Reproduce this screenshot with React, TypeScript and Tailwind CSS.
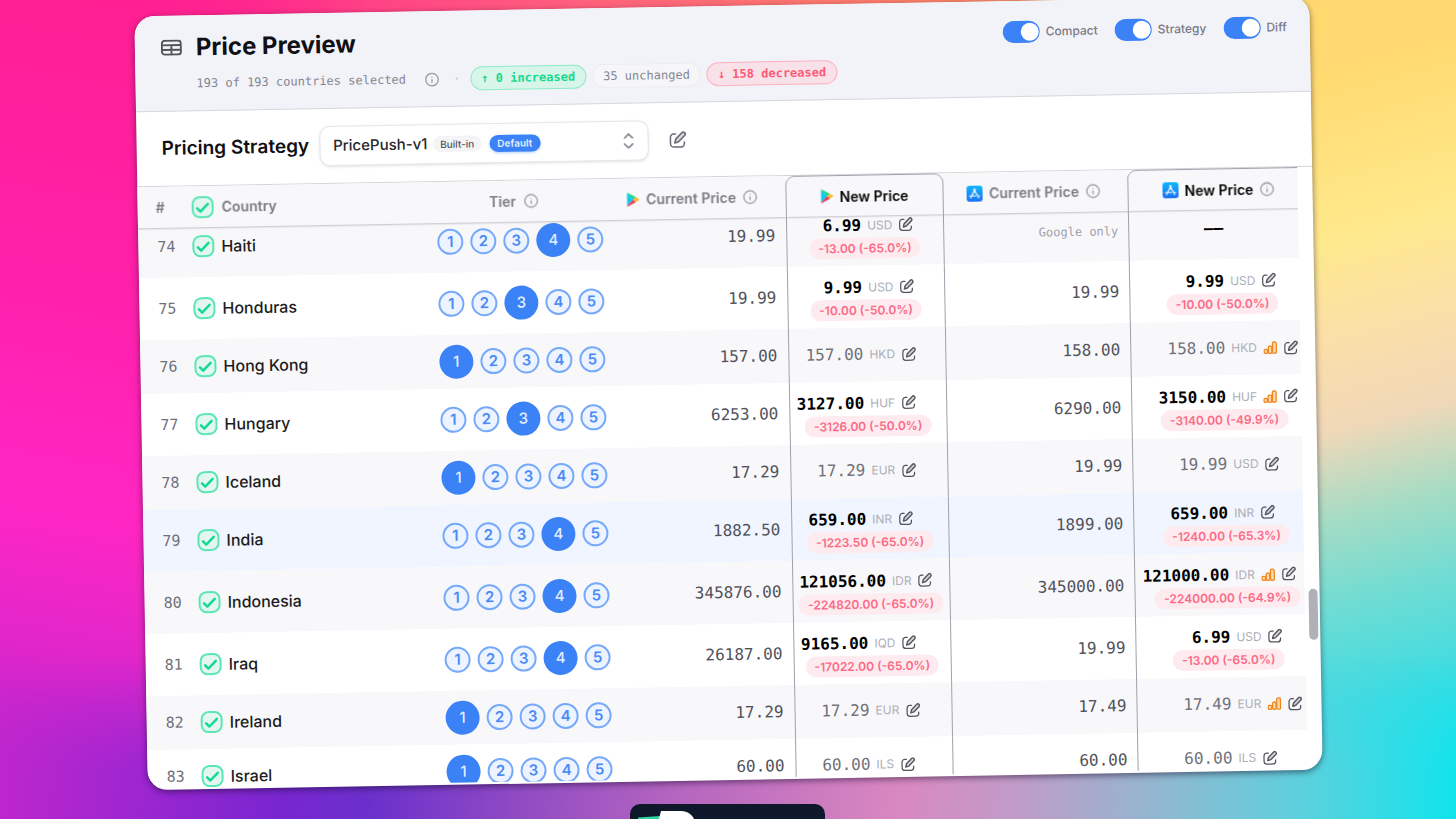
import { useLayoutEffect, useRef, useState } from "react";
import { ChevronDown, ChevronUp, Info } from "lucide-react";

type Quote = {
  price: string;
  currency: string;
  diff?: string;
  chart?: boolean;
};

type Row = {
  id: number;
  country: string;
  tier: number;
  play: string;
  playNew: Quote;
  app: string | null;
  appNew: Quote | null;
};

const ROWS: Row[] = [
  { id: 74, country: "Haiti", tier: 4, play: "19.99", playNew: { price: "6.99", currency: "USD", diff: "-13.00 (-65.0%)" }, app: null, appNew: null },
  { id: 75, country: "Honduras", tier: 3, play: "19.99", playNew: { price: "9.99", currency: "USD", diff: "-10.00 (-50.0%)" }, app: "19.99", appNew: { price: "9.99", currency: "USD", diff: "-10.00 (-50.0%)" } },
  { id: 76, country: "Hong Kong", tier: 1, play: "157.00", playNew: { price: "157.00", currency: "HKD" }, app: "158.00", appNew: { price: "158.00", currency: "HKD", chart: true } },
  { id: 77, country: "Hungary", tier: 3, play: "6253.00", playNew: { price: "3127.00", currency: "HUF", diff: "-3126.00 (-50.0%)" }, app: "6290.00", appNew: { price: "3150.00", currency: "HUF", diff: "-3140.00 (-49.9%)", chart: true } },
  { id: 78, country: "Iceland", tier: 1, play: "17.29", playNew: { price: "17.29", currency: "EUR" }, app: "19.99", appNew: { price: "19.99", currency: "USD" } },
  { id: 79, country: "India", tier: 4, play: "1882.50", playNew: { price: "659.00", currency: "INR", diff: "-1223.50 (-65.0%)" }, app: "1899.00", appNew: { price: "659.00", currency: "INR", diff: "-1240.00 (-65.3%)" } },
  { id: 80, country: "Indonesia", tier: 4, play: "345876.00", playNew: { price: "121056.00", currency: "IDR", diff: "-224820.00 (-65.0%)" }, app: "345000.00", appNew: { price: "121000.00", currency: "IDR", diff: "-224000.00 (-64.9%)", chart: true } },
  { id: 81, country: "Iraq", tier: 4, play: "26187.00", playNew: { price: "9165.00", currency: "IQD", diff: "-17022.00 (-65.0%)" }, app: "19.99", appNew: { price: "6.99", currency: "USD", diff: "-13.00 (-65.0%)" } },
  { id: 82, country: "Ireland", tier: 1, play: "17.29", playNew: { price: "17.29", currency: "EUR" }, app: "17.49", appNew: { price: "17.49", currency: "EUR", chart: true } },
  { id: 83, country: "Israel", tier: 1, play: "60.00", playNew: { price: "60.00", currency: "ILS" }, app: "60.00", appNew: { price: "60.00", currency: "ILS" } },
];

const HIGHLIGHTED = 79;

function EditIcon({ className }: { className: string }) {
  return (
    <svg viewBox="0 0 24 24" fill="none" stroke="currentColor" strokeLinecap="round" strokeLinejoin="round" className={className} aria-hidden="true">
      <path d="M9.500 4H7a4.500 4.500 0 0 0-4.500 4.500V17A4.500 4.500 0 0 0 7 21.500h9.500A4.500 4.500 0 0 0 21 17v-2" strokeWidth="2" />
      <path d="M17.800 2.600a2.600 2.600 0 0 1 3.700 3.700l-8.300 8.300-4.900 1.500 1.300-5.100z" strokeWidth="2.200" fill="currentColor" fillOpacity="0.25" />
    </svg>
  );
}

function EditButton({ label }: { label: string }) {
  return (
    <button type="button" aria-label={label} className="shrink-0 text-[#55555f]">
      <EditIcon className="size-[15px]" />
    </button>
  );
}

function TableIcon() {
  return (
    <svg viewBox="0 0 21 16" fill="none" stroke="currentColor" strokeWidth="1.900" className="h-4 w-[21px] shrink-0 text-[#52525b]" aria-hidden="true">
      <rect x="1" y="1" width="19" height="14" rx="3" />
      <path d="M1 5.500h19M1 10.200h19M10.500 5.500V15" />
    </svg>
  );
}

function PlayIcon() {
  return (
    <svg viewBox="0 0 26 28" className="h-[14px] w-[13px] shrink-0" aria-hidden="true">
      <path d="M1 1.500v25L13.500 14z" fill="#12c8ee" />
      <path d="M1 1.500 13.500 14l4.800-4.800L2.800.6C2 .2 1 .5 1 1.500z" fill="#18d58c" />
      <path d="M1 26.500 13.500 14l4.800 4.800L2.800 27.400C2 27.800 1 27.500 1 26.500z" fill="#f5324c" />
      <path d="M18.300 9.200 13.500 14l4.800 4.800 6-3.400c1.200-.7 1.200-2.100 0-2.800z" fill="#fdbb2d" />
    </svg>
  );
}

function AppStoreIcon() {
  return (
    <svg viewBox="0 0 32 32" className="size-4 shrink-0" aria-hidden="true">
      <defs>
        <linearGradient id="store" x1="0" y1="0" x2="0" y2="1">
          <stop offset="0" stopColor="#12b7fb" />
          <stop offset="1" stopColor="#1b6ff5" />
        </linearGradient>
      </defs>
      <rect width="32" height="32" rx="6" fill="url(#store)" />
      <path d="M17.500 7 10 20.500M14.500 7 22 20.500M6 20.500h12M22.500 20.500H26M8.800 23l-.8 1.500M23.300 23l.8 1.500" stroke="#fff" strokeWidth="2.400" strokeLinecap="round" fill="none" />
    </svg>
  );
}

function ChartIcon() {
  return (
    <svg viewBox="0 0 28 28" fill="#fdd9ae" stroke="#ee8620" strokeWidth="2.600" className="size-[14px] shrink-0" aria-hidden="true">
      <rect x="1.500" y="17.500" width="7" height="8" rx="2.500" />
      <rect x="10" y="11" width="7" height="14.500" rx="2.500" />
      <rect x="18.500" y="3" width="7.500" height="22.500" rx="2.500" />
    </svg>
  );
}

function CheckBox({ label }: { label: string }) {
  return (
    <span className="relative inline-flex size-[22px] shrink-0">
      <input
        type="checkbox"
        defaultChecked
        aria-label={label}
        className="peer size-[22px] appearance-none rounded-[8px] border-2 border-[#5ce6b5] bg-[#e3f7f0]"
      />
      <svg viewBox="0 0 22 22" fill="none" stroke="#14d992" strokeWidth="2.500" strokeLinecap="round" strokeLinejoin="round" className="pointer-events-none absolute inset-0 opacity-0 peer-checked:opacity-100" aria-hidden="true">
        <path d="m5.500 12.200 3.200 3.200 7.500-7.600" />
      </svg>
    </span>
  );
}

function Toggle({ label }: { label: string }) {
  return (
    <label className="flex items-center gap-[6px] text-[12px] font-medium text-[#7a7a84]">
      <input
        type="checkbox"
        role="switch"
        defaultChecked
        className="relative h-[22px] w-[37px] appearance-none rounded-full bg-[#a1a1aa] before:absolute before:top-[2px] before:left-[2px] before:size-[18px] before:rounded-full before:bg-white checked:bg-[#3b82f6] checked:before:left-[18px]"
      />
      {label}
    </label>
  );
}

function InfoButton({ label }: { label: string }) {
  return (
    <button type="button" aria-label={label} className="shrink-0 text-[#94949e]">
      <Info className="size-[15px]" />
    </button>
  );
}

function TierPicker({ initial, country }: { initial: number; country: string }) {
  const [tier, setTier] = useState(initial);
  return (
    <div className="flex items-center gap-[7px]">
      {[1, 2, 3, 4, 5].map((n) => (
        <button
          key={n}
          type="button"
          aria-label={`${country} tier ${n}`}
          aria-pressed={n === tier}
          onClick={() => setTier(n)}
          className={
            n === tier
              ? "flex size-[34px] shrink-0 items-center justify-center rounded-full bg-[#3b82f6] text-[15px] font-medium text-[#e4eeff]"
              : "flex size-[26px] shrink-0 items-center justify-center rounded-full border-2 border-[#76a9fa] bg-[#edf4ff] text-[15px] font-semibold text-[#4a8bf6]"
          }
        >
          {n}
        </button>
      ))}
    </div>
  );
}

function NewPrice({ quote, priceClass, label }: { quote: Quote | null; priceClass: string; label: string }) {
  if (!quote) {
    return (
      <div className={`${priceClass} text-right font-['DejaVu_Sans_Mono',monospace] text-[16px] font-bold text-black`}>––</div>
    );
  }
  const changed = Boolean(quote.diff);
  return (
    <div className={changed ? "flex flex-col gap-[2px] pt-1" : "flex flex-col"}>
      <div className="flex h-5 items-center gap-[6px]">
        <span
          className={`${priceClass} text-right font-['DejaVu_Sans_Mono',monospace] text-[16px] ${changed ? "font-bold text-black" : "text-[#71717a]"}`}
        >
          {quote.price}
        </span>
        <span className="text-[12px] text-[#aeaeb8]">{quote.currency}</span>
        {quote.chart && <ChartIcon />}
        <EditButton label={label} />
      </div>
      {quote.diff && (
        <div className="flex justify-center pr-[7px]">
          <span className="rounded-full bg-[#fdebef] px-[9px] text-[12px] leading-[21px] font-semibold whitespace-nowrap text-[#fc6a86]">
            {quote.diff}
          </span>
        </div>
      )}
    </div>
  );
}

const HEAD = "sticky top-0 z-10 h-[42px] border-b border-[#cfcfd6] bg-[#f8f8fa] p-0 align-middle font-semibold shadow-[0_1px_1px_rgba(0,0,0,0.06)]";
const NEW_HEAD = "sticky top-0 z-10 h-[42px] rounded-t-[9px] border border-[#a0a0ab] border-b-[#cfcfd6] bg-[#f8f8fa] p-0 align-middle font-semibold text-black shadow-[0_1px_1px_rgba(0,0,0,0.06)]";

export default function App() {
  const scroller = useRef<HTMLDivElement>(null);

  useLayoutEffect(() => {
    if (scroller.current) scroller.current.scrollTop = 13;
  }, []);

  return (
    <main className="relative h-screen overflow-hidden bg-[linear-gradient(98deg,#ff1f8f_0%,#ff2f8b_15%,#ff5c7e_35%,#ff8568_60%,#f6b877_76%,#fddb78_84%,#ffdf74_100%)] font-[Inter,'Liberation_Sans',sans-serif]">
      <div className="absolute inset-y-0 left-0 w-1/4 bg-[linear-gradient(190deg,#ff1f8f_0%,#ff20a8_35%,#ff26c4_64%,#d826cc_84%,#a826d0_100%)] [mask-image:linear-gradient(to_right,#000_35%,transparent)]" />
      <div className="absolute inset-y-0 right-0 w-1/4 bg-[linear-gradient(165deg,#ffd970_0%,#ffd96f_14%,#ffe98c_33%,#fbdfa8_44%,#f0d8b8_54%,#a4dcc4_64%,#6cdcd4_74%,#3cdce2_85%,#10e6ee_100%)] [mask-image:linear-gradient(to_right,transparent,#000_40%)]" />
      <div className="absolute inset-x-0 bottom-0 h-1/5 bg-[linear-gradient(95deg,#c026cc_0%,#9a26d0_11%,#7826d0_20%,#6b30cc_26%,#8c48c4_35%,#b868bf_48%,#d988c0_62%,#c09cc8_70%,#90b8d0_80%,#58d2de_90%,#10e4ec_100%)] [mask-image:linear-gradient(to_top,#000_30%,transparent)]" />

      <section
        aria-label="Price preview"
        className="relative mx-auto mt-[6px] flex h-[94.5vh] w-[80.7%] -rotate-1 flex-col overflow-hidden rounded-[20px] bg-white shadow-[0_2px_6px_rgba(20,10,40,0.55)]"
      >
        <header className="flex items-start justify-between border-b border-[#d6d8e0] bg-[#f2f3f9] pt-4 pr-[23px] pb-[15px] pl-[26px]">
          <div>
            <div className="flex h-8 items-center gap-[14px]">
              <TableIcon />
              <h1 className="text-[24px] font-bold text-[#0f0f14]">Price Preview</h1>
            </div>
            <div className="mt-2 flex h-6 items-center pl-[35px] font-['DejaVu_Sans_Mono',monospace] text-[12px] text-[#85858f]">
              <span>193 of 193 countries selected</span>
              <span className="ml-[18px] flex">
                <InfoButton label="About selection" />
              </span>
              <span className="mr-[10px] ml-[14px] text-[#c4c4cc]">·</span>
              <span className="flex gap-[6px]">
                <span className="rounded-full border border-[#8debc8] bg-[#d8f5ea] px-[10px] leading-[22px] font-bold text-[#16d98f]">↑ 0 increased</span>
                <span className="rounded-full border border-[#ededf1] bg-[#f6f6f9] px-[10px] leading-[22px]">35 unchanged</span>
                <span className="rounded-full border border-[#fdb0be] bg-[#f9e1e9] px-[10px] leading-[22px] font-bold text-[#fc5a76]">↓ 158 decreased</span>
              </span>
            </div>
          </div>
          <div className="flex h-[30px] items-center gap-[17px]">
            <Toggle label="Compact" />
            <Toggle label="Strategy" />
            <Toggle label="Diff" />
          </div>
        </header>

        <div className="flex items-center py-[17px] pl-[25px]">
          <label htmlFor="strategy" className="text-[19px] font-semibold text-[#0f0f14]">
            Pricing Strategy
          </label>
          <div className="relative ml-[11px] w-[329px]">
            <select
              id="strategy"
              className="block h-10 w-full appearance-none rounded-[10px] border border-[#e6e6ec] bg-white pl-3 text-[15px] font-medium text-[#27272a] shadow-[0_1px_3px_rgba(0,0,0,0.12)]"
            >
              <option>PricePush-v1</option>
            </select>
            <span className="pointer-events-none absolute inset-y-0 left-[113px] flex items-center gap-2 text-[10px]">
              <span className="rounded-full bg-[#f4f4f6] px-[7px] leading-4 font-medium text-[#52525b]">Built-in</span>
              <span className="rounded-full bg-[#3b82f6] px-2 leading-[17px] font-semibold text-[#e4eeff] shadow-[0_1px_3px_rgba(59,130,246,0.4)]">Default</span>
            </span>
            <span className="pointer-events-none absolute inset-y-0 right-[14px] flex flex-col items-center justify-center text-[#9a9aa4]">
              <ChevronUp className="h-[6px] w-3" viewBox="3 7 18 9" strokeWidth={3} />
              <ChevronDown className="mt-1 h-[6px] w-3" viewBox="3 7 18 9" strokeWidth={3} />
            </span>
          </div>
          <button type="button" aria-label="Edit strategy" className="ml-5 text-[#6a6a74]">
            <EditIcon className="size-[18px]" />
          </button>
        </div>

        <div className="relative min-h-0 flex-1 border-t border-[#d3d3da] pb-[2px]">
          <div ref={scroller} className="mr-[15px] h-full overflow-x-hidden overflow-y-auto [scrollbar-width:none]">
            <table className="w-[calc(100%+16px)] table-fixed border-separate border-spacing-0 text-left">
              <colgroup>
                <col className="w-[46px]" />
                <col />
                <col className="w-[169px]" />
                <col className="w-[187px]" />
                <col className="w-[158px]" />
                <col className="w-[184px]" />
                <col className="w-[186px]" />
              </colgroup>
              <thead className="text-[14px] text-[#7a7a84]">
                <tr>
                  <th className={HEAD}>
                    <div className="pl-[18px]">#</div>
                  </th>
                  <th className={HEAD}>
                    <div className="flex items-center gap-2 pl-2">
                      <CheckBox label="Select all countries" />
                      Country
                    </div>
                  </th>
                  <th className={HEAD}>
                    <div className="flex items-center justify-center gap-2">
                      Tier
                      <InfoButton label="About tiers" />
                    </div>
                  </th>
                  <th className={HEAD}>
                    <div className="flex items-center justify-center gap-[7px] whitespace-nowrap">
                      <PlayIcon />
                      Current Price
                      <InfoButton label="About current Google Play price" />
                    </div>
                  </th>
                  <th className={NEW_HEAD}>
                    <div className="flex items-center justify-center gap-[6px] whitespace-nowrap">
                      <PlayIcon />
                      New Price
                    </div>
                  </th>
                  <th className={HEAD}>
                    <div className="flex items-center justify-center gap-[7px] pr-1 whitespace-nowrap">
                      <AppStoreIcon />
                      Current Price
                      <InfoButton label="About current App Store price" />
                    </div>
                  </th>
                  <th className={NEW_HEAD}>
                    <div className="flex items-center justify-center gap-[6px] pr-1 whitespace-nowrap">
                      <AppStoreIcon />
                      New Price
                      <InfoButton label="About new App Store price" />
                    </div>
                  </th>
                </tr>
              </thead>
              <tbody>
                {ROWS.map((row) => (
                  <tr
                    key={row.id}
                    className={`${row.playNew.diff ? "h-[62px]" : "h-[54px]"} ${
                      row.id === HIGHLIGHTED ? "bg-[#f0f5ff]" : row.id % 2 === 0 ? "bg-[#f8f8fa]" : "bg-white"
                    }`}
                  >
                    <td className="p-0 pl-[19px] font-['DejaVu_Sans_Mono',monospace] text-[15px] text-[#71717a]">{row.id}</td>
                    <td className="p-0">
                      <div className="flex items-center gap-[7px] pl-2 text-[16px] font-medium text-[#1c1c22]">
                        <CheckBox label={`Select ${row.country}`} />
                        {row.country}
                      </div>
                    </td>
                    <td className="p-0 pl-[7px]">
                      <TierPicker initial={row.tier} country={row.country} />
                    </td>
                    <td className="p-0 pr-[11px] text-right font-['DejaVu_Sans_Mono',monospace] text-[16px] text-[#52525c]">{row.play}</td>
                    <td className="border-x border-[#a0a0ab] p-0 pl-[6px]">
                      <NewPrice quote={row.playNew} priceClass="min-w-[68px]" label={`Edit Google Play price for ${row.country}`} />
                    </td>
                    <td className="p-0 pr-[10px] text-right font-['DejaVu_Sans_Mono',monospace]">
                      {row.app ? (
                        <span className="text-[16px] text-[#52525c]">{row.app}</span>
                      ) : (
                        <span className="text-[12px] text-[#a1a1aa]">Google only</span>
                      )}
                    </td>
                    <td className="border-l border-[#a0a0ab] p-0 pl-[6px]">
                      <NewPrice quote={row.appNew} priceClass="w-[88px]" label={`Edit App Store price for ${row.country}`} />
                    </td>
                  </tr>
                ))}
              </tbody>
            </table>
          </div>
          <div className="absolute top-[70%] right-[2px] h-[51px] w-[9px] rounded-full bg-[#b0b0b8]" />
        </div>
      </section>

      <div className="absolute bottom-0 left-[43.3%] h-[15px] w-[195px] overflow-hidden rounded-t-[10px] bg-[#0f172a]">
        <svg viewBox="0 0 195 15" className="h-[15px] w-[195px]" aria-hidden="true">
          <path d="M8 15v-1.500L30 12v3z" fill="#2fd3a0" />
          <path d="M29 15l2-8h20c7 0 11 4 13 8z" fill="#fff" />
        </svg>
      </div>
    </main>
  );
}
